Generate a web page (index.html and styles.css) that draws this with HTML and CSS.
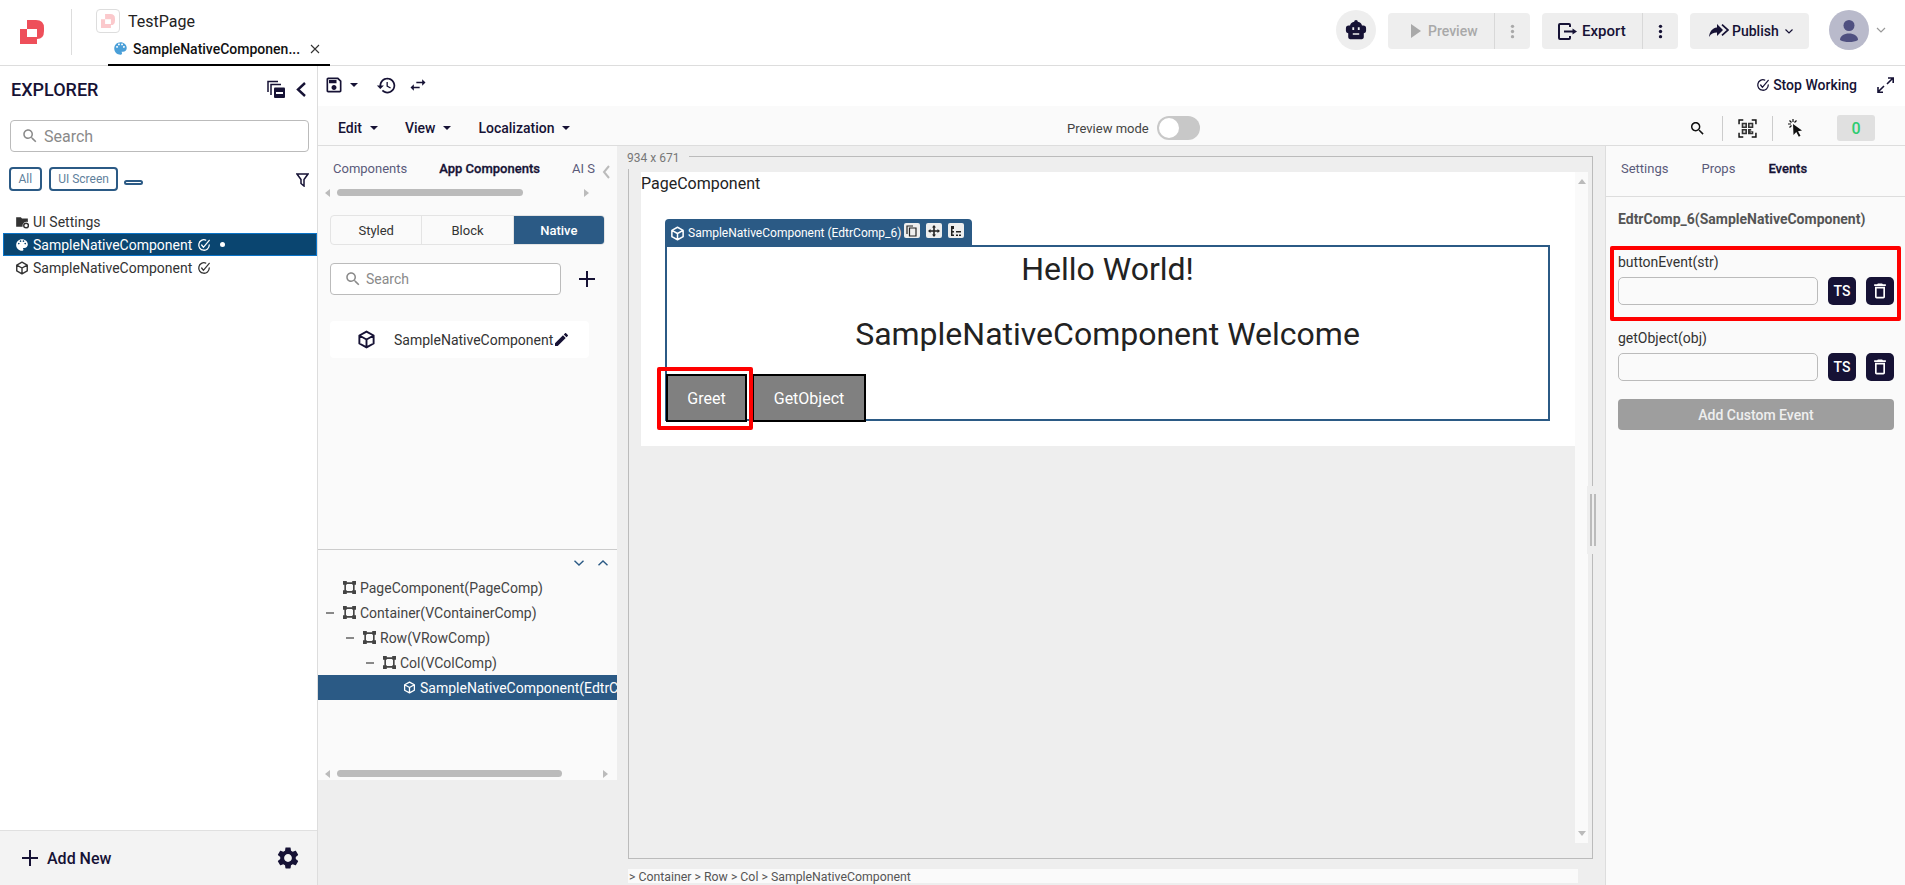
FILE: index.html
```html
<!DOCTYPE html>
<html lang="en">
    <head>
        <meta charset="UTF-8" />
        <meta name="viewport" content="width=device-width, initial-scale=1.0" />
        <title>TestPage</title>
        <link rel="stylesheet" href="styles.css">
    </head>
    <body>
        <!-- shared icons -->
        <svg class="defs" aria-hidden="true">
            <symbol id="i-cube" viewBox="0 0 24 24"><path fill="none" stroke="currentColor" stroke-width="2.4" stroke-linejoin="round" d="M12 2l9 5v10l-9 5-9-5V7zM3 7l9 5 9-5M12 12v10"/></symbol>
            <symbol id="i-node" viewBox="0 0 24 24"><path fill="none" stroke="currentColor" stroke-width="3" d="M4 4h16v16H4z"/><path fill="currentColor" d="M0 0h7v7H0zM17 0h7v7h-7zM0 17h7v7H0zM17 17h7v7h-7z"/></symbol>
            <symbol id="i-edited" viewBox="0 0 24 24"><path fill="none" stroke="currentColor" stroke-width="2.2" stroke-linecap="round" d="M21 12a9 9 0 1 1-6-8.500M8 12l3 4L21 4"/></symbol>
            <symbol id="i-search" viewBox="0 0 24 24"><path fill="currentColor" d="M15.5 14h-.79l-.28-.27C15.41 12.59 16 11.11 16 9.5 16 5.91 13.09 3 9.5 3S3 5.91 3 9.5 5.91 16 9.5 16c1.61 0 3.09-.59 4.23-1.57l.27.28v.79l5 4.99L20.49 19l-4.99-5zm-6 0C7.01 14 5 11.99 5 9.5S7.01 5 9.5 5 14 7.01 14 9.5 11.99 14 9.5 14z"/></symbol>
            <symbol id="i-palette" viewBox="0 0 24 24"><path fill="currentColor" d="M12 2C6.49 2 2 6.49 2 12s4.49 10 10 10c1.38 0 2.5-1.12 2.5-2.5 0-.61-.23-1.2-.64-1.67-.08-.1-.13-.21-.13-.33 0-.28.22-.5.5-.5H16c3.31 0 6-2.69 6-6 0-4.96-4.49-9-10-9zm-5.5 9c-.83 0-1.5-.67-1.5-1.5S5.67 8 6.5 8 8 8.67 8 9.5 7.33 11 6.5 11zm3-4C8.67 7 8 6.33 8 5.5S8.67 4 9.5 4s1.5.67 1.5 1.5S10.33 7 9.5 7zm5 0c-.83 0-1.5-.67-1.5-1.5S13.67 4 14.5 4s1.5.67 1.5 1.5S15.33 7 14.5 7zm3 4c-.83 0-1.5-.67-1.5-1.5S16.67 8 17.5 8s1.5.67 1.5 1.5-.67 1.5-1.5 1.5z"/></symbol>
            <symbol id="i-plus" viewBox="0 0 16 16"><path fill="currentColor" d="M7 0h2v7h7v2H9v7H7V9H0V7h7z"/></symbol>
            <symbol id="i-dots" viewBox="0 0 4 16"><circle cx="2" cy="2.5" r="1.8" fill="currentColor"/><circle cx="2" cy="8" r="1.8" fill="currentColor"/><circle cx="2" cy="13.5" r="1.8" fill="currentColor"/></symbol>
            <symbol id="i-trash" viewBox="0 0 24 24"><path fill="currentColor" d="M6 19c0 1.1.9 2 2 2h8c1.1 0 2-.9 2-2V7H6v12zM8 9h8v10H8V9zm7.5-5l-1-1h-5l-1 1H5v2h14V4z"/></symbol>
            <symbol id="i-logo" viewBox="0 0 24 24"><path fill="currentColor" fill-rule="evenodd" d="M7 0h9q8 0 8 8v3q0 8-7 8v5H0V9h7zM7 9v8h10V9z"/></symbol>
        </svg>

        <header class="topbar">
            <svg class="logo" width="24" height="24"><use href="#i-logo"/></svg>
            <div class="top-divider"></div>
            <div class="page-info">
                <div class="page-title">
                    <span class="page-badge"><svg width="14" height="14"><use href="#i-logo"/></svg></span>
                    <span>TestPage</span>
                </div>
                <div class="file-tab">
                    <svg class="file-tab-icon" width="15" height="15"><use href="#i-palette"/></svg>
                    <span class="file-tab-name">SampleNativeComponen...</span>
                    <svg class="file-tab-close" width="10" height="10" viewBox="0 0 10 10"><path fill="none" stroke="currentColor" stroke-width="1.1" d="M1 1l8 8M9 1l-8 8"/></svg>
                </div>
            </div>
            <div class="top-actions">
                <span class="robot">
                    <svg width="22" height="22" viewBox="0 0 24 24"><path fill="currentColor" fill-rule="evenodd" d="M12 1a2 2 0 0 1 2 2c2.5.3 4 2 4.5 4H20q3 0 3 3v3q0 2-2.500 2.500V20q0 2-2 2H5.500q-2 0-2-2v-4.500Q1 15 1 13v-3q0-3 3-3h1.500C6 5 7.500 3.300 10 3a2 2 0 0 1 2-2zM8 9v3h2V9zM14 9v3h2V9zM8.500 15.500v1.800h7v-1.800z"/></svg>
                </span>
                <div class="split-btn is-disabled">
                    <span class="split-main preview-main">
                        <svg width="10" height="14" viewBox="0 0 10 14"><path fill="currentColor" d="M0 0l10 7-10 7z"/></svg>
                        Preview
                    </span>
                    <span class="split-more"><svg width="5" height="15"><use href="#i-dots"/></svg></span>
                </div>
                <div class="split-btn">
                    <span class="split-main export-main">
                        <svg width="19" height="17" viewBox="0 0 19 17"><path fill="none" stroke="currentColor" stroke-width="2" d="M11 1H2q-1 0-1 1v13q0 1 1 1h9M11 1q1 0 1 1v2M11 16q1 0 1-1v-2M6 8.500h10"/><path fill="currentColor" d="M14.500 5.500l4.500 3-4.500 3z"/></svg>
                        Export
                    </span>
                    <span class="split-more"><svg width="5" height="15"><use href="#i-dots"/></svg></span>
                </div>
                <div class="publish-btn">
                    <svg width="20" height="14" viewBox="0 0 20 14"><path fill="currentColor" d="M8 0l6 6-6 6V8.500C4.500 8.500 2 9.500 0 13c.5-5 3-9 8-9.500z"/><path fill="none" stroke="currentColor" stroke-width="1.700" d="M13 .6L19 6l-6 5.400"/></svg>
                    <span>Publish</span>
                    <svg class="publish-chevron" width="8" height="5" viewBox="0 0 8 5"><path fill="none" stroke="currentColor" stroke-width="1.200" d="M.5.5L4 4 7.500.5"/></svg>
                </div>
                <span class="avatar">
                    <svg width="40" height="40" viewBox="0 0 40 40"><circle cx="20" cy="15.500" r="5.500" fill="#4f5080"/><path fill="#4f5080" d="M11 30c0-4 4-6.500 9-6.500s9 2.500 9 6.500c-2.500 1.500-5.500 2-9 2s-6.500-.5-9-2z"/></svg>
                </span>
                <svg class="avatar-chevron" width="10" height="6" viewBox="0 0 10 6"><path fill="none" stroke="currentColor" stroke-width="1.200" d="M1 1l4 4 4-4"/></svg>
            </div>
        </header>

        <div class="main">
            <aside class="explorer">
                <div class="explorer-head">
                    <span class="explorer-title">EXPLORER</span>
                    <span class="explorer-tools">
                        <svg width="18" height="18" viewBox="0 0 18 18"><path fill="none" stroke="currentColor" stroke-width="1.500" d="M1 12V1.500h10M4 15V4.500h10"/><rect x="7" y="7.500" width="11" height="10.500" rx="1" fill="currentColor"/><rect x="9" y="12" width="7" height="2" fill="#fff"/></svg>
                        <svg width="10" height="15" viewBox="0 0 10 15"><path fill="none" stroke="currentColor" stroke-width="2.400" d="M9 1L2 7.500 9 14"/></svg>
                    </span>
                </div>
                <div class="explorer-search">
                    <svg width="18" height="18"><use href="#i-search"/></svg>
                    <span>Search</span>
                </div>
                <div class="chips">
                    <span class="chip">All</span>
                    <span class="chip">UI Screen</span>
                    <span class="chip-empty"></span>
                    <svg class="filter-icon" width="13" height="14" viewBox="0 0 13 14"><path fill="none" stroke="currentColor" stroke-width="1.500" d="M1 1h11L8 6.500V13L5 10.500v-4z"/></svg>
                </div>
                <div class="file-list">
                    <div class="file-row">
                        <svg width="14" height="14" viewBox="0 0 24 24"><path fill="currentColor" d="M2 4h8l2 2h10v6a7 7 0 0 0-9 8H2z"/><circle cx="19" cy="18" r="4" fill="none" stroke="currentColor" stroke-width="2.500"/></svg>
                        <span>UI Settings</span>
                    </div>
                    <div class="file-row is-selected">
                        <svg width="14" height="14"><use href="#i-palette"/></svg>
                        <span>SampleNativeComponent</span>
                        <svg class="edited" width="14" height="14"><use href="#i-edited"/></svg>
                        <span class="unsaved-dot"></span>
                    </div>
                    <div class="file-row">
                        <svg width="14" height="14"><use href="#i-cube"/></svg>
                        <span>SampleNativeComponent</span>
                        <svg class="edited" width="14" height="14"><use href="#i-edited"/></svg>
                    </div>
                </div>
                <div class="explorer-foot">
                    <span class="add-new">
                        <svg width="16" height="16"><use href="#i-plus"/></svg>
                        Add New
                    </span>
                    <svg class="foot-gear" width="26" height="26" viewBox="0 0 24 24"><path fill="currentColor" d="M19.14 12.94c.04-.3.06-.61.06-.94 0-.32-.02-.64-.07-.94l2.03-1.58c.18-.14.23-.41.12-.61l-1.92-3.32c-.12-.22-.37-.29-.59-.22l-2.39.96c-.5-.38-1.03-.7-1.62-.94l-.36-2.54c-.04-.24-.24-.41-.48-.41h-3.84c-.24 0-.43.17-.47.41l-.36 2.54c-.59.24-1.13.57-1.62.94l-2.39-.96c-.22-.08-.47 0-.59.22L2.74 8.87c-.12.21-.08.47.12.61l2.03 1.58c-.05.3-.09.63-.09.94s.02.64.07.94l-2.03 1.58c-.18.14-.23.41-.12.61l1.92 3.32c.12.22.37.29.59.22l2.39-.96c.5.38 1.03.7 1.62.94l.36 2.54c.05.24.24.41.48.41h3.84c.24 0 .44-.17.47-.41l.36-2.54c.59-.24 1.13-.56 1.62-.94l2.39.96c.22.08.47 0 .59-.22l1.92-3.32c.12-.22.07-.47-.12-.61l-2.01-1.58zM12 15.6c-1.98 0-3.6-1.62-3.6-3.6s1.62-3.6 3.6-3.6 3.6 1.62 3.6 3.6-1.62 3.6-3.6 3.6z"/></svg>
                </div>
            </aside>

            <div class="workspace">
                <div class="toolbar">
                    <svg width="20" height="20" viewBox="0 0 24 24"><path fill="currentColor" d="M17 3H5c-1.11 0-2 .9-2 2v14c0 1.1.89 2 2 2h14c1.1 0 2-.9 2-2V7l-4-4zm2 16H5V5h11.17L19 7.83V19zm-7-7c-1.66 0-3 1.34-3 3s1.34 3 3 3 3-1.34 3-3-1.34-3-3-3zM6 6h9v4H6z"/></svg>
                    <span class="caret"></span>
                    <svg class="tool-history" width="21" height="21" viewBox="0 0 24 24"><path fill="currentColor" d="M13 3c-4.97 0-9 4.03-9 9H1l3.89 3.89.07.14L9 12H6c0-3.87 3.13-7 7-7s7 3.13 7 7-3.13 7-7 7c-1.93 0-3.68-.79-4.94-2.06l-1.42 1.42C8.27 19.99 10.51 21 13 21c4.97 0 9-4.03 9-9s-4.03-9-9-9zm-1 5v5l4.28 2.54.72-1.21-3.5-2.08V8H12z"/></svg>
                    <svg class="tool-swap" width="20" height="20" viewBox="0 0 24 24"><path fill="currentColor" d="M6.99 11L3 15l3.99 4v-3H14v-2H6.99v-3zM21 9l-3.99-4v3H10v2h7.01v3L21 9z"/></svg>
                    <span class="stop-working">
                        <svg width="14" height="14"><use href="#i-edited"/></svg>
                        Stop Working
                    </span>
                    <svg class="tool-expand" width="17" height="16" viewBox="0 0 17 16"><path fill="none" stroke="currentColor" stroke-width="1.600" d="M10 7l6-6M11 1h5.200v5M7 9l-6 6M1 10v5.200h5"/></svg>
                </div>

                <div class="menubar">
                    <div class="menu-left">
                        <span class="menu-item">Edit<span class="caret"></span></span>
                        <span class="menu-item">View<span class="caret"></span></span>
                        <span class="menu-item">Localization<span class="caret"></span></span>
                    </div>
                    <span class="preview-mode">Preview mode</span>
                    <span class="toggle"><span class="toggle-knob"></span></span>
                    <div class="menu-right">
                        <svg class="menu-search" width="13" height="13" viewBox="3 3 18 18"><use href="#i-search" width="24" height="24"/></svg>
                        <span class="menu-sep"></span>
                        <svg width="19" height="19" viewBox="0 0 18 18"><path fill="none" stroke="currentColor" stroke-width="1.400" d="M1 5V1h4M13 1h4v4M17 13v4h-4M5 17H1v-4"/><path fill="#333" d="M3.500 3.500h5v5h-5zM9.500 3.500h5v5h-5zM3.500 9.500h5v5h-5zM9.500 9.500h3v2h2v3h-5z"/><path fill="#ddd" d="M5 5h2v2H5zM11 5h2v2h-2zM5 11h2v2H5zM11 11h1v2h1v-1h-1z"/></svg>
                        <span class="menu-sep"></span>
                        <svg width="14" height="18" viewBox="0 0 14 18"><path fill="currentColor" d="M5 5l9 6.500-4 .7 2.500 4.500-1.700 1L8.300 13 5.500 16z"/><path fill="none" stroke="currentColor" stroke-width="1.200" d="M5 0v3M0 5h3M1.500 1.500l2 2M8.500 1.500l-2 2M1.500 8.500l2-2"/></svg>
                        <span class="issue-count">0</span>
                    </div>
                </div>

                <div class="panels">
                    <section class="left-col">
                        <div class="left-panel">
                            <div class="left-top">
                                <div class="tabs">
                                    <span class="tab">Components</span>
                                    <span class="tab is-active">App Components</span>
                                    <span class="tab">AI S</span>
                                    <svg class="tabs-back" width="8" height="14" viewBox="0 0 8 14"><path fill="none" stroke="#bbb" stroke-width="2" d="M7 1L2 7l5 6"/></svg>
                                </div>
                                <div class="hscroll tabs-scroll">
                                    <span class="arrow-left"></span>
                                    <span class="thumb"></span>
                                    <span class="arrow-right"></span>
                                </div>
                                <div class="segmented">
                                    <span class="segment">Styled</span>
                                    <span class="segment">Block</span>
                                    <span class="segment is-on">Native</span>
                                </div>
                                <div class="comp-search-row">
                                    <div class="comp-search">
                                        <svg width="18" height="18"><use href="#i-search"/></svg>
                                        <span>Search</span>
                                    </div>
                                    <svg class="comp-add" width="16" height="16"><use href="#i-plus"/></svg>
                                </div>
                                <div class="comp-card">
                                    <svg width="19" height="19"><use href="#i-cube"/></svg>
                                    <span>SampleNativeComponent</span>
                                    <svg width="13" height="13" viewBox="3 3 18 18"><path fill="currentColor" d="M3 17.25V21h3.75L17.81 9.94l-3.75-3.75L3 17.25zM20.71 7.04c.39-.39.39-1.02 0-1.41l-2.34-2.34c-.39-.39-1.02-.39-1.41 0l-1.83 1.83 3.75 3.75 1.83-1.83z"/></svg>
                                </div>
                            </div>
                            <div class="tree">
                                <div class="tree-tools">
                                    <svg width="10" height="6" viewBox="0 0 10 6"><path fill="none" stroke="#2b5a85" stroke-width="1.400" d="M.5.8L5 5 9.500.8"/></svg>
                                    <svg width="10" height="6" viewBox="0 0 10 6"><path fill="none" stroke="#2b5a85" stroke-width="1.400" d="M.5 5.200L5 1l4.500 4.200"/></svg>
                                </div>
                                <div class="tree-row level-0"><svg width="13" height="13"><use href="#i-node"/></svg>PageComponent(PageComp)</div>
                                <div class="tree-row level-1"><span class="dash"></span><svg width="13" height="13"><use href="#i-node"/></svg>Container(VContainerComp)</div>
                                <div class="tree-row level-2"><span class="dash"></span><svg width="13" height="13"><use href="#i-node"/></svg>Row(VRowComp)</div>
                                <div class="tree-row level-3"><span class="dash"></span><svg width="13" height="13"><use href="#i-node"/></svg>Col(VColComp)</div>
                                <div class="tree-row level-4 is-selected"><svg width="13" height="13"><use href="#i-cube"/></svg>SampleNativeComponent(EdtrComp_6)</div>
                                <div class="hscroll tree-scroll">
                                    <span class="arrow-left"></span>
                                    <span class="thumb"></span>
                                    <span class="arrow-right"></span>
                                </div>
                            </div>
                        </div>
                    </section>

                    <section class="canvas-col">
                        <div class="frame">
                            <span class="frame-size">934 x 671</span>
                            <div class="viewport">
                                <div class="page">
                                    <div class="page-name">PageComponent</div>
                                    <div class="comp">
                                        <div class="comp-bar">
                                            <svg width="15" height="15"><use href="#i-cube"/></svg>
                                            <span class="comp-bar-name">SampleNativeComponent (EdtrComp_6)</span>
                                            <span class="comp-bar-btn"><svg width="12" height="12" viewBox="0 0 12 12"><path fill="none" stroke="currentColor" stroke-width="1.200" d="M1 9V1h6M3.500 3h6.500v8H3.500z"/></svg></span>
                                            <span class="comp-bar-btn"><svg width="12" height="12" viewBox="0 0 12 12"><path fill="currentColor" d="M6 0l2 2.500H6.800v2.700h2.700V4L12 6 9.500 8V6.800H6.800v2.700H8L6 12 4 9.500h1.200V6.800H2.500V8L0 6l2.500-2v1.200h2.700V2.500H4z"/></svg></span>
                                            <span class="comp-bar-btn"><svg width="12" height="12" viewBox="0 0 12 12"><path fill="currentColor" d="M1 1h3v3H2.500v2H4v1.500H2.500v2H4V11H1zM6 6h5v1.500H6zM6 9.500h2V11H6zM9 9.500h2V11H9z"/></svg></span>
                                        </div>
                                        <h1 class="comp-heading first">Hello World!</h1>
                                        <h1 class="comp-heading second">SampleNativeComponent Welcome</h1>
                                        <div class="comp-actions">
                                            <button class="comp-btn greet">Greet</button>
                                            <button class="comp-btn get-object">GetObject</button>
                                        </div>
                                        <span class="mark mark-greet"></span>
                                    </div>
                                </div>
                                <div class="vscroll">
                                    <span class="arrow-up"></span>
                                    <span class="arrow-down"></span>
                                </div>
                            </div>
                        </div>
                        <div class="crumbs">&gt; Container &gt; Row &gt; Col &gt; SampleNativeComponent</div>
                        <div class="splitter"><span></span><span></span></div>
                    </section>

                    <aside class="props">
                        <div class="props-tabs">
                            <span class="tab">Settings</span>
                            <span class="tab">Props</span>
                            <span class="tab is-active">Events</span>
                        </div>
                        <div class="props-body">
                            <div class="props-title">EdtrComp_6(SampleNativeComponent)</div>
                            <div class="event">
                                <label class="event-label">buttonEvent(str)</label>
                                <div class="event-fields">
                                    <span class="event-input"></span>
                                    <span class="event-btn">TS</span>
                                    <span class="event-btn"><svg width="20" height="20"><use href="#i-trash"/></svg></span>
                                </div>
                                <span class="mark mark-event"></span>
                            </div>
                            <div class="event">
                                <label class="event-label">getObject(obj)</label>
                                <div class="event-fields">
                                    <span class="event-input"></span>
                                    <span class="event-btn">TS</span>
                                    <span class="event-btn"><svg width="20" height="20"><use href="#i-trash"/></svg></span>
                                </div>
                            </div>
                            <div class="add-event">Add Custom Event</div>
                        </div>
                    </aside>
                </div>
            </div>
        </div>
    </body>
</html>
```

FILE: styles.css
```css
* {
    box-sizing: border-box;
}

body {
    margin: 0;
    height: 100vh;
    display: flex;
    flex-direction: column;
    overflow: hidden;
    font-family: 'Roboto', sans-serif;
    font-size: 14px;
    color: #161235;
    background-color: #fff;
}

svg {
    display: block;
    flex-shrink: 0;
}

.defs {
    position: absolute;
    width: 0;
    height: 0;
}

/* top bar */
.topbar {
    height: 66px;
    flex-shrink: 0;
    display: flex;
    align-items: flex-start;
    border-bottom: 1px solid #ddd;
}

.logo {
    margin: 20px 0 0 20px;
    color: #ee4f5a;
}

.top-divider {
    width: 1px;
    height: 46px;
    margin: 9px 0 0 27px;
    background-color: #ddd;
}

.page-info {
    margin-left: 24px;
    padding-top: 9px;
}

.page-title {
    display: flex;
    align-items: center;
    gap: 8px;
    font-size: 16px;
    color: #222;
}

.page-badge {
    width: 24px;
    height: 24px;
    display: flex;
    align-items: center;
    justify-content: center;
    border: 1px solid #ddd;
    border-radius: 4px;
    color: #fbc9cc;
}

.file-tab {
    width: 222px;
    height: 33px;
    margin-left: 12px;
    padding-left: 5px;
    display: flex;
    align-items: center;
    border-bottom: 2px solid #000;
}

.file-tab-icon {
    color: #4a9fd8;
}

.file-tab-name {
    margin-left: 5px;
    font-weight: 500;
    color: #111;
}

.file-tab-close {
    margin-left: 10px;
    color: #333;
}

.top-actions {
    margin-left: auto;
    padding: 10px 19px 0 0;
    display: flex;
    align-items: flex-start;
}

.robot {
    width: 40px;
    height: 40px;
    margin-right: 12px;
    display: flex;
    align-items: center;
    justify-content: center;
    border-radius: 50%;
    background-color: #eee;
}

.split-btn {
    height: 36px;
    margin: 3px 12px 0 0;
    display: flex;
    border-radius: 4px;
    background-color: #eee;
    font-size: 15px;
    font-weight: 500;
}

.split-btn.is-disabled {
    color: #a9a9a9;
    font-size: 14px;
}

.split-main {
    display: flex;
    align-items: center;
    border-right: 1px solid #d8d8d8;
}

.preview-main {
    width: 107px;
    padding-left: 23px;
    gap: 7px;
}

.export-main {
    width: 101px;
    padding-left: 16px;
    gap: 5px;
}

.split-more {
    width: 35px;
    display: flex;
    align-items: center;
    justify-content: center;
}

.publish-btn {
    width: 119px;
    height: 36px;
    margin: 3px 20px 0 0;
    padding-left: 19px;
    display: flex;
    align-items: center;
    gap: 3px;
    border-radius: 4px;
    background-color: #eee;
    font-weight: 500;
}

.publish-chevron {
    margin-left: 3px;
}

.avatar {
    width: 40px;
    height: 40px;
    border-radius: 50%;
    background-color: #b9bacb;
}

.avatar-chevron {
    margin: 17px 0 0 7px;
    color: #999;
}

/* main layout */
.main {
    flex: 1;
    min-height: 0;
    display: flex;
}

.explorer {
    width: 318px;
    flex-shrink: 0;
    display: flex;
    flex-direction: column;
    border-right: 1px solid #ddd;
}

.explorer-head {
    height: 48px;
    padding: 0 11px 2px;
    display: flex;
    align-items: center;
    justify-content: space-between;
}

.explorer-title {
    font-size: 18px;
    font-weight: 500;
}

.explorer-tools {
    display: flex;
    align-items: center;
    gap: 11px;
    color: #161235;
}

.explorer-search {
    height: 32px;
    margin: 6px 8px 0 10px;
    padding-left: 10px;
    display: flex;
    align-items: center;
    gap: 5px;
    border: 1px solid #bbb;
    border-radius: 4px;
    color: #8a8a8a;
    font-size: 16px;
}

.chips {
    height: 24px;
    margin: 15px 9px 0 9px;
    display: flex;
    gap: 7px;
}

.chip {
    padding: 0 7.5px;
    display: flex;
    align-items: center;
    border: 2px solid #2b5a85;
    border-radius: 4px;
    color: #5f7f9c;
    font-size: 12px;
}

.chip-empty {
    width: 19px;
    height: 5px;
    margin: 13px 0 0 -1px;
    border: 2px solid #2b5a85;
    border-radius: 3px;
}

.filter-icon {
    margin: 6px -1px 0 auto;
}

.file-list {
    margin-top: 19px;
}

.file-row {
    height: 23px;
    margin-left: 3px;
    padding-left: 12px;
    display: flex;
    align-items: center;
    gap: 4px;
    color: #333;
}

.file-row .edited {
    margin-left: 1px;
}

.file-row.is-selected {
    background-color: #0a4570;
    box-shadow: inset 0 0 0 1px #0a74c8;
    color: #fff;
}

.unsaved-dot {
    width: 5px;
    height: 5px;
    margin-left: 5px;
    border-radius: 50%;
    background-color: #fff;
}

.explorer-foot {
    height: 55px;
    margin-top: auto;
    padding: 0 16px 0 22px;
    display: flex;
    align-items: center;
    justify-content: space-between;
    border-top: 1px solid #e0e0e0;
    background-color: #f3f3f3;
}

.add-new {
    display: flex;
    align-items: center;
    gap: 9px;
    font-size: 16px;
    font-weight: 500;
}

.workspace {
    flex: 1;
    min-width: 0;
    display: flex;
    flex-direction: column;
}

/* toolbars */
.toolbar {
    height: 40px;
    flex-shrink: 0;
    padding: 0 11px 2px 6px;
    display: flex;
    align-items: center;
}

.caret {
    width: 0;
    height: 0;
    margin-left: 6px;
    border-left: 4px solid transparent;
    border-right: 4px solid transparent;
    border-top: 4px solid currentColor;
}

.tool-history {
    margin-left: 18px;
}

.tool-swap {
    margin-left: 11px;
}

.stop-working {
    margin-left: auto;
    display: flex;
    align-items: center;
    gap: 3px;
    font-weight: 500;
}

.tool-expand {
    margin-left: 20px;
}

.menubar {
    height: 40px;
    flex-shrink: 0;
    padding-top: 5px;
    display: flex;
    align-items: center;
    border-bottom: 1px solid #ddd;
    background-color: #fafafa;
}

.menu-left {
    width: 749px;
    padding-left: 20px;
    display: flex;
    gap: 27px;
}

.menu-item {
    display: flex;
    align-items: center;
    font-weight: 500;
}

.menu-item .caret {
    margin-left: 8px;
}

.preview-mode {
    width: 90px;
    font-size: 13px;
    color: #444;
}

.toggle {
    width: 43px;
    height: 24px;
    padding: 2px;
    border-radius: 12px;
    background-color: #c8c8c8;
}

.toggle-knob {
    display: block;
    width: 20px;
    height: 20px;
    border-radius: 50%;
    background-color: #fff;
}

.menu-right {
    margin-left: auto;
    padding-right: 30px;
    display: flex;
    align-items: center;
    color: #111;
}

.menu-search {
    margin-right: 3px;
}

.menu-sep {
    width: 1px;
    height: 25px;
    margin: 0 15px;
    background-color: #ccc;
}

.issue-count {
    width: 38px;
    height: 26px;
    margin-left: 35px;
    display: flex;
    align-items: center;
    justify-content: center;
    border-radius: 3px;
    background-color: #e0e0e0;
    color: #2ecc71;
    font-size: 16px;
    font-weight: 500;
}

.panels {
    flex: 1;
    min-height: 0;
    display: flex;
}

/* components panel */
.left-col {
    width: 299px;
    flex-shrink: 0;
    background-color: #eee;
}

.left-panel {
    height: 634px;
    display: flex;
    flex-direction: column;
    background-color: #fafafa;
}

.left-top {
    height: 404px;
    flex-shrink: 0;
    border-bottom: 1px solid #ccc;
}

.tabs {
    height: 43px;
    position: relative;
    padding: 2px 0 0 15px;
    display: flex;
    align-items: center;
    gap: 32px;
    overflow: hidden;
}

.tab {
    font-size: 13px;
    color: #5a5a7a;
    white-space: nowrap;
}

.tab.is-active {
    color: #161235;
    font-weight: 500;
    -webkit-text-stroke: 0.3px #161235;
}

.tabs-back {
    position: absolute;
    top: 19px;
    right: 7px;
}

.hscroll {
    height: 7px;
    display: flex;
    align-items: center;
}

.thumb {
    display: block;
    height: 7px;
    border-radius: 4px;
    background-color: #bbb;
}

.arrow-left,
.arrow-right {
    width: 0;
    height: 0;
    border-top: 4px solid transparent;
    border-bottom: 4px solid transparent;
}

.arrow-left {
    border-right: 5px solid #bbb;
}

.arrow-right {
    border-left: 5px solid #bbb;
}

.tabs-scroll {
    padding-left: 7px;
}

.tabs-scroll .thumb {
    width: 186px;
    margin: 0 61px 0 7px;
}

.segmented {
    width: 275px;
    height: 30px;
    margin: 19px 0 0 12px;
    display: flex;
    border: 1px solid #e4e4e4;
    border-radius: 4px;
    overflow: hidden;
}

.segment {
    flex: 1;
    display: flex;
    align-items: center;
    justify-content: center;
    border-right: 1px solid #e4e4e4;
    font-size: 13px;
    color: #333;
}

.segment.is-on {
    border-right: 0;
    background-color: #2b5a85;
    color: #fff;
    font-weight: 500;
}

.comp-search-row {
    margin: 18px 0 0 12px;
    display: flex;
    align-items: center;
}

.comp-search {
    width: 231px;
    height: 32px;
    padding-left: 13px;
    display: flex;
    align-items: center;
    gap: 4px;
    border: 1px solid #bbb;
    border-radius: 4px;
    background-color: #fff;
    color: #8a8a8a;
}

.comp-add {
    margin-left: 18px;
}

.comp-card {
    width: 259px;
    height: 37px;
    margin: 26px 0 0 12px;
    padding-left: 27px;
    display: flex;
    align-items: center;
    border-radius: 4px;
    background-color: #fff;
    color: #333;
}

.comp-card span {
    margin-left: 18px;
}

.comp-card svg {
    color: #161235;
}

.comp-card span + svg {
    margin-left: 2px;
}

.tree {
    flex: 1;
    min-height: 0;
    display: flex;
    flex-direction: column;
}

.tree-tools {
    height: 25px;
    padding: 10px 9px 0 0;
    display: flex;
    justify-content: flex-end;
    gap: 14px;
}

.tree-row {
    height: 25px;
    flex-shrink: 0;
    display: flex;
    align-items: center;
    white-space: nowrap;
    overflow: hidden;
    color: #444;
}

.tree-row svg {
    margin-right: 4px;
}

.dash {
    width: 8px;
    height: 2px;
    margin-right: 9px;
    background-color: #888;
}

.level-0 {
    padding-left: 25px;
}

.level-1 {
    padding-left: 8px;
}

.level-2 {
    padding-left: 28px;
}

.level-3 {
    padding-left: 48px;
}

.level-4 {
    padding-left: 85px;
}

.tree-row.is-selected {
    background-color: #2b5a85;
    color: #fff;
}

.tree-scroll {
    margin: auto 0 3px;
    padding-left: 7px;
}

.tree-scroll .thumb {
    width: 225px;
    margin: 0 41px 0 7px;
}

/* canvas */
.canvas-col {
    width: 988px;
    flex-shrink: 0;
    position: relative;
    background-color: #eee;
}

.frame {
    width: 965px;
    height: 703px;
    position: relative;
    margin: 10px 0 0 11px;
    padding: 15px 4px 0 12px;
    border: 1px solid #bbb;
}

.frame-size {
    position: absolute;
    top: -11px;
    left: -2px;
    height: 23px;
    padding-right: 10px;
    background-color: #eee;
    font-size: 12px;
    line-height: 24px;
    color: #777;
}

.viewport {
    height: 671px;
    display: flex;
}

.page {
    width: 934px;
    height: 274px;
    background-color: #fff;
}

.page-name {
    height: 22px;
    font-size: 16px;
    line-height: 24px;
    color: #222;
}

.comp {
    width: 885px;
    height: 176px;
    position: relative;
    margin: 51px 0 0 24px;
    border: 2px solid #2b5a85;
    color: #222;
}

.comp-bar {
    position: absolute;
    top: -28px;
    left: -2px;
    width: 307px;
    height: 28px;
    padding-left: 5px;
    display: flex;
    align-items: center;
    border-radius: 4px 4px 0 0;
    background-color: #2b5a85;
    color: #fff;
    font-size: 12px;
}

.comp-bar-name {
    margin: 0 3px 0 3px;
    white-space: nowrap;
}

.comp-bar-btn {
    width: 16px;
    height: 15px;
    margin: 0 6px 5px 0;
    display: flex;
    align-items: center;
    justify-content: center;
    border-radius: 2px;
    background-color: #eee;
    color: #222;
}

.comp-heading {
    margin: 0;
    font-size: 32px;
    font-weight: 400;
    line-height: 37px;
    text-align: center;
}

.comp-heading.first {
    margin: 4px 0 28px;
}

.comp-heading.second {
    margin-bottom: 21px;
}

.comp-actions {
    display: flex;
    margin-left: -1px;
}

.comp-btn {
    height: 48px;
    padding: 0;
    border: 2px solid #000;
    background-color: #808080;
    color: #fff;
    font-family: 'Roboto', sans-serif;
    font-size: 16px;
}

.greet {
    width: 81px;
}

.get-object {
    width: 114px;
    margin-left: 5px;
}

.mark {
    position: absolute;
    border: 4px solid #f00;
    border-radius: 2px;
    pointer-events: none;
}

.mark-greet {
    top: 120px;
    left: -10px;
    width: 96px;
    height: 63px;
}

.vscroll {
    width: 13px;
    padding: 7px 3px;
    display: flex;
    flex-direction: column;
    justify-content: space-between;
    background-color: #fafafa;
}

.arrow-up,
.arrow-down {
    width: 0;
    height: 0;
    border-left: 4px solid transparent;
    border-right: 4px solid transparent;
}

.arrow-up {
    border-bottom: 5px solid #bbb;
}

.arrow-down {
    border-top: 5px solid #bbb;
}

.crumbs {
    width: 950px;
    height: 15px;
    margin: 9px 0 0 11px;
    padding-left: 1px;
    border-top: 1px solid #eee;
    background-color: #fafafa;
    font-size: 12.3px;
    line-height: 16px;
    color: #555;
    white-space: nowrap;
}

.splitter {
    position: absolute;
    top: 340px;
    left: 970px;
    width: 13px;
    height: 68px;
    padding: 8px 0 8px 3px;
    display: flex;
    gap: 2px;
    background-color: #eee;
}

.splitter span {
    width: 2px;
    background-color: #bbb;
}

/* right panel */
.props {
    flex: 1;
    min-width: 0;
    border-left: 1px solid #ddd;
    background-color: #fafafa;
}

.props-tabs {
    height: 51px;
    padding: 0 0 5px 15px;
    display: flex;
    align-items: center;
    gap: 33px;
    border-bottom: 1px solid #ddd;
}

.props-body {
    padding: 12px 11px 0 12px;
}

.props-title {
    height: 20px;
    margin-bottom: 24px;
    font-weight: 700;
    line-height: 20px;
    color: #555;
    white-space: nowrap;
}

.event {
    position: relative;
    margin-bottom: 24px;
}

.event-label {
    display: block;
    height: 18px;
    margin-bottom: 6px;
    line-height: 18px;
    color: #333;
}

.event-fields {
    display: flex;
    gap: 10px;
}

.event-input {
    width: 200px;
    height: 28px;
    border: 1px solid #bbb;
    border-radius: 5px;
}

.event-btn {
    width: 28px;
    height: 28px;
    display: flex;
    align-items: center;
    justify-content: center;
    border-radius: 5px;
    background-color: #161235;
    color: #fff;
    font-weight: 500;
}

.mark-event {
    top: -7px;
    left: -8px;
    right: -7px;
    bottom: -16px;
}

.add-event {
    height: 31px;
    margin-top: -6px;
    display: flex;
    align-items: center;
    justify-content: center;
    border-radius: 4px;
    background-color: #9e9e9e;
    color: #eee;
    font-weight: 500;
}
```
